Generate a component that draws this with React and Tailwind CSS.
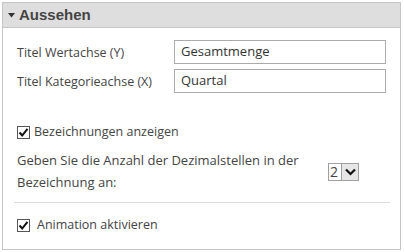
import React from "react";

function Check({ checked = true }) {
  return (
    <span className="w-[13px] h-[13px] border border-[#555] bg-white flex items-center justify-center shrink-0">
      {checked && (
        <svg width="11" height="11" viewBox="0 0 11 11">
          <path d="M1.5 5.5 L4.2 8.5 L9.5 1.8" fill="none" stroke="#111" strokeWidth="2" />
        </svg>
      )}
    </span>
  );
}

export default function App() {
  return (
    <div
      className="w-[404px] h-[252px] bg-white pt-[2px] pl-[2px]"
      style={{ fontFamily: '"Open Sans", "Noto Sans", sans-serif' }}
    >
      <div className="w-[399px] h-[248px] border border-[#c6c6c6] flex flex-col">
        {/* Header */}
        <div className="h-[25px] bg-[#dedede] border-b border-[#c6c6c6] flex items-center pl-[5px] gap-[4px]">
          <svg width="7" height="5" viewBox="0 0 7 5">
            <path d="M0 0 L7 0 L3.5 4.5 Z" fill="#333" />
          </svg>
          <span className="text-[15px] font-bold text-[#444] font-['Liberation_Sans',Arial,sans-serif]">
            Aussehen
          </span>
        </div>

        <div className="px-[14px] text-[12.5px] text-[#444] flex flex-col">
          {/* Axis titles */}
          <div className="mt-[12px] flex flex-col gap-[5px]">
            <div className="flex items-center">
              <span className="w-[157px] pt-[3px]">Titel Wertachse (Y)</span>
              <div className="w-[212px] h-[24px] border border-[#ababab] flex items-center px-[6px] text-[13px] text-[#333]">
                Gesamtmenge
              </div>
            </div>
            <div className="flex items-center">
              <span className="w-[157px] pt-[3px]">Titel Kategorieachse (X)</span>
              <div className="w-[212px] h-[24px] border border-[#ababab] flex items-center px-[6px] text-[13px] text-[#333]">
                Quartal
              </div>
            </div>
          </div>

          {/* Labels */}
          <label className="mt-[30px] flex items-center gap-[4px]">
            <Check />
            <span>Bezeichnungen anzeigen</span>
          </label>

          <div className="mt-[7px] flex items-center">
            <span className="w-[311px] leading-[22px] text-[13px]">
              Geben Sie die Anzahl der Dezimalstellen in der Bezeichnung an:
            </span>
            <div className="mt-[2px] h-[18px] flex border border-[#a0a0a0]">
              <span className="w-[12px] text-[14px] leading-[16px] text-[#444] pl-[1px]">2</span>
              <span className="w-[17px] bg-[#e6e6e6] border-l border-[#a0a0a0] flex items-center justify-center">
                <svg width="11" height="8" viewBox="0 0 11 8">
                  <path d="M1 1.5 L5.5 6 L10 1.5" fill="none" stroke="#111" strokeWidth="2.2" />
                </svg>
              </span>
            </div>
          </div>

          <div className="mt-[9px] h-px bg-[#dcdcdc] -ml-[3px] w-[376px]" />

          <label className="mt-[13px] flex items-center gap-[7px]">
            <Check />
            <span>Animation aktivieren</span>
          </label>
        </div>
      </div>
    </div>
  );
}
